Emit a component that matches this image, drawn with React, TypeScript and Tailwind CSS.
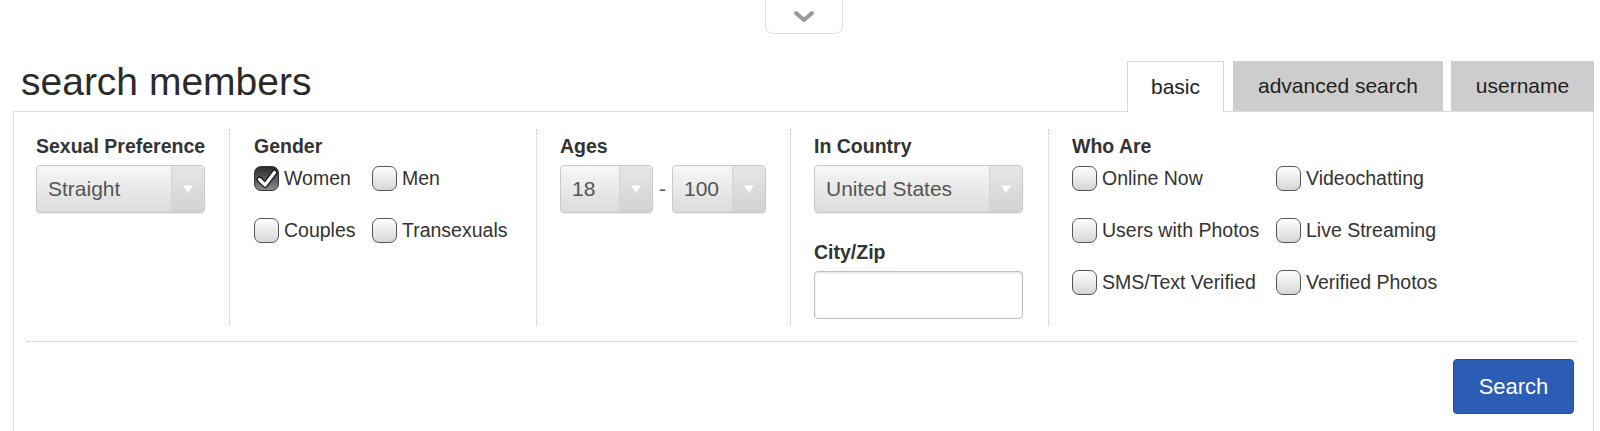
import React from "react";

const font = { fontFamily: '"Liberation Sans", Arial, sans-serif' };

function Arrow() {
  return (
    <svg width="12" height="10" viewBox="0 0 12 10">
      <path d="M1 1.5 L11 1.5 L6 8.5 Z" fill="#fff" />
    </svg>
  );
}

function Select({ value, width }: { value: string; width: string }) {
  return (
    <div
      className={`flex h-[48px] ${width} overflow-hidden rounded-[4px] border border-[#c9c9c9] bg-gradient-to-b from-[#f7f7f7] to-[#dcdcdc] shadow-[0_1px_1px_rgba(0,0,0,0.08)]`}
    >
      <div className="flex flex-1 items-center pl-[11px] text-[21px] text-[#555]">{value}</div>
      <div className="flex w-[33px] items-center justify-center border-l border-[#d4d4d4] bg-gradient-to-b from-[#e6e6e6] to-[#d2d2d2]">
        <Arrow />
      </div>
    </div>
  );
}

function Check({ label, checked = false }: { label: string; checked?: boolean }) {
  return (
    <label className="flex h-[27px] items-center gap-[5px] text-[19.5px] text-[#333]">
      <span
        className={
          checked
            ? "flex h-[25px] w-[25px] items-center justify-center rounded-[7px] border-[1.5px] border-[#333] bg-gradient-to-b from-[#2b2b2b] to-[#8a8a8a]"
            : "h-[25px] w-[25px] rounded-[7px] border-[1.5px] border-[#555] bg-gradient-to-b from-white to-[#d6d6d6]"
        }
      >
        {checked && (
          <svg width="22" height="20" viewBox="0 0 22 20">
            <path
              d="M3.5 10.5 L9 16 L18.5 3.5"
              fill="none"
              stroke="#1a1a1a"
              strokeWidth="6"
              strokeLinecap="round"
              strokeLinejoin="round"
            />
            <path
              d="M3.5 10.5 L9 16 L18.5 3.5"
              fill="none"
              stroke="#fff"
              strokeWidth="3.2"
              strokeLinecap="round"
              strokeLinejoin="round"
            />
          </svg>
        )}
      </span>
      {label}
    </label>
  );
}

function Heading({ children }: { children: React.ReactNode }) {
  return <div className="mb-[8px] text-[19.5px] font-bold leading-[22px] text-[#333]">{children}</div>;
}

export default function App() {
  return (
    <div className="min-h-screen bg-white" style={font}>
      <div className="ml-[13px] w-[1581px]">
        <div className="mx-auto flex h-[34px] w-[78px] items-center justify-center rounded-b-[8px] border border-t-0 border-[#dedede]">
          <svg width="22" height="14" viewBox="0 0 22 14">
            <path d="M3 3 L11 10 L19 3" fill="none" stroke="#9a9a9a" strokeWidth="4" strokeLinecap="round" strokeLinejoin="round" />
          </svg>
        </div>

        <div className="flex h-[77px] items-end justify-between">
          <h1 className="mb-[10px] pl-[8px] text-[39px] font-normal leading-[39px] text-[#2b2b2b]">search members</h1>
          <div className="flex items-end gap-[8px] text-[21px] text-[#222]">
            <div className="relative z-10 -mb-px mr-px flex h-[51px] w-[97px] items-center justify-center border border-b-0 border-[#d6d6d6] bg-white">
              basic
            </div>
            <div className="flex h-[50px] w-[210px] items-center justify-center bg-[#cdcdcd]">advanced search</div>
            <div className="flex h-[50px] w-[143px] items-center justify-center bg-[#cdcdcd]">username</div>
          </div>
        </div>

        <div className="h-[330px] border border-b-0 border-[#dcdcdc]">
          <div className="flex pt-[17px]">
            <div className="h-[196px] w-[215px] pl-[22px] pt-[6px]">
              <Heading>Sexual Preference</Heading>
              <Select value="Straight" width="w-[169px]" />
            </div>

            <div className="h-[196px] w-[307px] border-l border-dotted border-[#c4c4c4] pl-[24px] pt-[6px]">
              <Heading>Gender</Heading>
              <div className="mt-[1px] grid grid-cols-[118px_auto] gap-y-[25px]">
                <Check label="Women" checked />
                <Check label="Men" />
                <Check label="Couples" />
                <Check label="Transexuals" />
              </div>
            </div>

            <div className="h-[196px] w-[254px] border-l border-dotted border-[#c4c4c4] pl-[23px] pt-[6px]">
              <Heading>Ages</Heading>
              <div className="flex items-center">
                <Select value="18" width="w-[93px]" />
                <span className="w-[19px] text-center text-[21px] text-[#555]">-</span>
                <Select value="100" width="w-[94px]" />
              </div>
            </div>

            <div className="h-[196px] w-[258px] border-l border-dotted border-[#c4c4c4] pl-[23px] pt-[6px]">
              <Heading>In Country</Heading>
              <Select value="United States" width="w-[209px]" />
              <div className="mt-[28px]">
                <Heading>City/Zip</Heading>
              </div>
              <input
                className="h-[48px] w-[209px] rounded-[4px] border border-[#bdbdbd] bg-white shadow-[inset_0_1px_2px_rgba(0,0,0,0.12)] outline-none"
                type="text"
              />
            </div>

            <div className="h-[196px] flex-1 border-l border-dotted border-[#c4c4c4] pl-[23px] pt-[6px]">
              <Heading>Who Are</Heading>
              <div className="mt-[1px] grid grid-cols-[204px_auto] gap-y-[25px]">
                <Check label="Online Now" />
                <Check label="Videochatting" />
                <Check label="Users with Photos" />
                <Check label="Live Streaming" />
                <Check label="SMS/Text Verified" />
                <Check label="Verified Photos" />
              </div>
            </div>
          </div>

          <div className="ml-[13px] mr-[16px] mt-[16px] border-t border-dotted border-[#c4c4c4]" />

          <div className="flex justify-end pr-[19px] pt-[17px]">
            <button className="h-[55px] w-[121px] rounded-[4px] border border-[#1f4f9c] bg-[#2a5db3] text-[22px] text-white">
              Search
            </button>
          </div>
        </div>
      </div>
    </div>
  );
}
